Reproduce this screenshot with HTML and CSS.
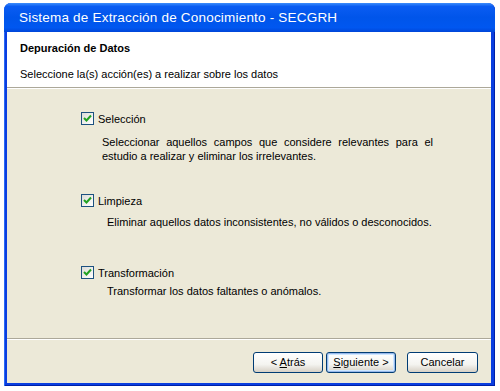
FILE: index.html
```html
<!DOCTYPE html>
<html lang="es">
<head>
    <meta charset="UTF-8">
    <title>Sistema de Extracción de Conocimiento - SECGRH</title>
    <link rel="stylesheet" href="styles.css">
</head>
<body>
    <div class="window">
        <div class="titlebar">Sistema de Extracción de Conocimiento - SECGRH</div>
        <div class="content">
            <div class="header">
                <h1>Depuración de Datos</h1>
                <p>Seleccione la(s) acción(es) a realizar sobre los datos</p>
            </div>

            <div class="options">
                <div class="option">
                    <label class="check-row">
                        <span class="checkbox"><svg width="9" height="9" viewBox="0 0 9 9"><path d="M1 4 L3.5 6.5 L8 1.5" fill="none" stroke="#21a121" stroke-width="2"/></svg></span>
                        Selección
                    </label>
                    <p class="desc justify">Seleccionar aquellos campos que considere relevantes para el estudio a realizar y eliminar los irrelevantes.</p>
                </div>
                <div class="option second">
                    <label class="check-row">
                        <span class="checkbox"><svg width="9" height="9" viewBox="0 0 9 9"><path d="M1 4 L3.5 6.5 L8 1.5" fill="none" stroke="#21a121" stroke-width="2"/></svg></span>
                        Limpieza
                    </label>
                    <p class="desc indent">Eliminar aquellos datos inconsistentes, no válidos o desconocidos.</p>
                </div>
                <div class="option third">
                    <label class="check-row">
                        <span class="checkbox"><svg width="9" height="9" viewBox="0 0 9 9"><path d="M1 4 L3.5 6.5 L8 1.5" fill="none" stroke="#21a121" stroke-width="2"/></svg></span>
                        Transformación
                    </label>
                    <p class="desc indent close">Transformar los datos faltantes o anómalos.</p>
                </div>
            </div>

            <div class="footer">
                <button class="btn">&lt; <u>A</u>trás</button>
                <button class="btn default"><u>S</u>iguiente &gt;</button>
                <button class="btn cancel">Cancelar</button>
            </div>
        </div>
    </div>
</body>
</html>
```

FILE: styles.css
```css
body {
    margin: 0;
    background: #ffffff;
    font-family: "Liberation Sans", Arial, sans-serif;
    font-size: 11px;
    color: #000000;
}

.window {
    width: 491px;
    height: 383px;
    margin: 3px 0 0 4px;
    box-sizing: border-box;
    padding: 0 4px 3px 3px;
    display: flex;
    flex-direction: column;
    background: #0a3ee0;
    border-radius: 7px 7px 0 0;
    box-shadow: inset 1px 0 0 #2a6af5, inset -1px -1px 0 #0020a8;
}

.titlebar {
    height: 29px;
    line-height: 30px;
    padding-left: 15px;
    color: #ffffff;
    font-size: 13.5px;
    letter-spacing: 0.2px;
    background: linear-gradient(#3c8dfb 0%, #0a5cf2 12%, #0055ea 50%, #0057f0 85%, #0046d8 100%);
    margin: 0 -4px 0 -3px;
    border-radius: 7px 7px 0 0;
}

.content {
    flex: 1;
    display: flex;
    flex-direction: column;
    background: #ece9d8;
}

.header {
    height: 55px;
    background: #ffffff;
    border-bottom: 1px solid #aca899;
    box-shadow: 0 1px 0 #ffffff;
    padding-left: 13px;
}

.header h1 {
    margin: 0;
    padding-top: 10px;
    font-size: 11px;
    font-weight: bold;
}

.header p {
    margin: 14px 0 0 0;
}

.options {
    flex: 1;
    padding: 24px 0 0 74px;
}

.option.second {
    margin-top: 31px;
}

.option.third {
    margin-top: 37px;
}

.check-row {
    display: flex;
    align-items: center;
    gap: 4px;
    height: 13px;
}

.checkbox {
    width: 11px;
    height: 11px;
    border: 1px solid #1c5180;
    background: linear-gradient(135deg, #dcdcd7, #ffffff);
    display: flex;
    align-items: center;
    justify-content: center;
}

.desc {
    margin: 8px 0 0 21px;
    width: 331px;
    line-height: 14px;
}

.desc.justify {
    text-align: justify;
    margin-top: 10px;
}

.desc.indent {
    margin-left: 26px;
    width: 340px;
}

.desc.close {
    margin-top: 5px;
}

.footer {
    height: 45px;
    border-top: 1px solid #aca899;
    box-shadow: inset 0 1px 0 #ffffff;
    display: flex;
    justify-content: flex-end;
    align-items: center;
    padding: 2px 13px 0 0;
    box-sizing: border-box;
}

.btn {
    width: 70px;
    height: 21px;
    font-family: "Liberation Sans", Arial, sans-serif;
    font-size: 11px;
    color: #000000;
    border: 1px solid #003c74;
    border-radius: 3px;
    background: linear-gradient(#ffffff 0%, #f4f4f0 60%, #d6d0c5 100%);
    padding: 0;
}

.btn.default {
    margin-left: 3px;
    box-shadow: inset 0 0 0 1px #98b8ea, inset 0 0 0 2px #cee7ff;
}

.btn.cancel {
    width: 71px;
    margin-left: 11px;
}
```
